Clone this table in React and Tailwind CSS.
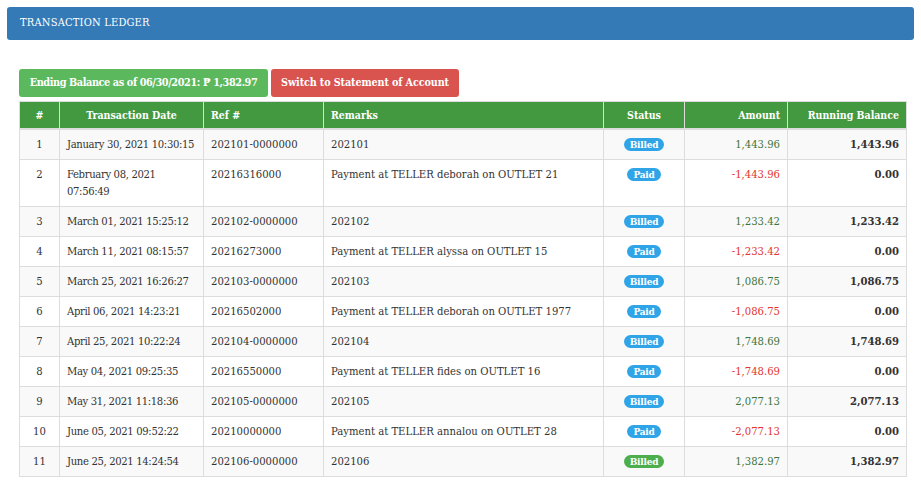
import React from 'react';

const rows = [
  { n: 1, date: 'January 30, 2021 10:30:15', ref: '202101-0000000', remarks: '202101', status: 'Billed', amount: '1,443.96', bal: '1,443.96' },
  { n: 2, date: 'February 08, 2021', time: '07:56:49', ref: '20216316000', remarks: 'Payment at TELLER deborah on OUTLET 21', status: 'Paid', amount: '-1,443.96', bal: '0.00' },
  { n: 3, date: 'March 01, 2021 15:25:12', ref: '202102-0000000', remarks: '202102', status: 'Billed', amount: '1,233.42', bal: '1,233.42' },
  { n: 4, date: 'March 11, 2021 08:15:57', ref: '20216273000', remarks: 'Payment at TELLER alyssa on OUTLET 15', status: 'Paid', amount: '-1,233.42', bal: '0.00' },
  { n: 5, date: 'March 25, 2021 16:26:27', ref: '202103-0000000', remarks: '202103', status: 'Billed', amount: '1,086.75', bal: '1,086.75' },
  { n: 6, date: 'April 06, 2021 14:23:21', ref: '20216502000', remarks: 'Payment at TELLER deborah on OUTLET 1977', status: 'Paid', amount: '-1,086.75', bal: '0.00' },
  { n: 7, date: 'April 25, 2021 10:22:24', ref: '202104-0000000', remarks: '202104', status: 'Billed', amount: '1,748.69', bal: '1,748.69' },
  { n: 8, date: 'May 04, 2021 09:25:35', ref: '20216550000', remarks: 'Payment at TELLER fides on OUTLET 16', status: 'Paid', amount: '-1,748.69', bal: '0.00' },
  { n: 9, date: 'May 31, 2021 11:18:36', ref: '202105-0000000', remarks: '202105', status: 'Billed', amount: '2,077.13', bal: '2,077.13' },
  { n: 10, date: 'June 05, 2021 09:52:22', ref: '20210000000', remarks: 'Payment at TELLER annalou on OUTLET 28', status: 'Paid', amount: '-2,077.13', bal: '0.00' },
  { n: 11, date: 'June 25, 2021 14:24:54', ref: '202106-0000000', remarks: '202106', status: 'Billed', amount: '1,382.97', bal: '1,382.97', last: true },
];

function Badge({ status, last }) {
  const color = last ? 'bg-[#4cae4c]' : 'bg-[#2fa4e7]';
  return (
    <span className={`inline-block ${color} text-white font-bold text-[10px] leading-[13px] px-[6px] rounded-full tracking-[-0.2px]`}>
      {status}
    </span>
  );
}

export default function App() {
  const td = 'border border-[#ddd] px-[7px] py-[6px] align-top';
  const th = 'border border-[#ddd] border-b-[2px] px-[7px] py-0';
  return (
    <div className="bg-white w-[921px] h-[483px] p-[7px] text-[#333] font-['DejaVu_Serif_Condensed','DejaVu_Serif',serif]">
      <div className="bg-[#337ab7] rounded-[3px] h-[33px] flex items-center px-[13px]">
        <span className="text-white text-[11px] tracking-[0.2px]">TRANSACTION LEDGER</span>
      </div>

      <div className="px-[12px] pt-[29px]">
        <div className="flex gap-[3px] mb-[4px]">
          <button className="bg-[#5cb85c] text-white font-bold text-[10.8px] tracking-[-0.4px] whitespace-nowrap h-[28px] w-[249px] rounded-[3px]">
            Ending Balance as of 06/30/2021: ₱ 1,382.97
          </button>
          <button className="bg-[#d9534f] text-white font-bold text-[10.7px] tracking-[-0.1px] whitespace-nowrap h-[28px] w-[188px] rounded-[3px]">
            Switch to Statement of Account
          </button>
        </div>

        <table className="table-fixed border-collapse w-[887px] text-[11.2px] leading-[17px]">
          <colgroup>
            <col className="w-[40px]" />
            <col className="w-[144px]" />
            <col className="w-[120px]" />
            <col className="w-[280px]" />
            <col className="w-[81px]" />
            <col className="w-[103px]" />
            <col className="w-[119px]" />
          </colgroup>
          <thead>
            <tr className="bg-[#43993f] text-white text-[10.5px] leading-[16px] font-bold h-[27px]">
              <th className={`${th} text-center`}>#</th>
              <th className={`${th} text-center`}>Transaction Date</th>
              <th className={`${th} text-left`}>Ref #</th>
              <th className={`${th} text-left`}>Remarks</th>
              <th className={`${th} text-center`}>Status</th>
              <th className={`${th} text-right`}>Amount</th>
              <th className={`${th} text-right`}>Running Balance</th>
            </tr>
          </thead>
          <tbody>
            {rows.map((r, i) => (
              <tr key={r.n} className={i % 2 === 0 ? 'bg-[#f9f9f9]' : 'bg-white'}>
                <td className={`${td} text-center`}>{r.n}</td>
                <td className={`${td} whitespace-nowrap tracking-[-0.35px]`}>
                  {r.date}
                  {r.time && (
                    <>
                      <br />
                      {r.time}
                    </>
                  )}
                </td>
                <td className={td}>{r.ref}</td>
                <td className={td}>{r.remarks}</td>
                <td className={`${td} text-center`}>
                  <Badge status={r.status} last={r.last} />
                </td>
                <td className={`${td} text-right ${r.amount.startsWith('-') ? 'text-[#e3342f]' : 'text-[#3c763d]'}`}>
                  {r.amount}
                </td>
                <td className={`${td} text-right font-bold`}>{r.bal}</td>
              </tr>
            ))}
          </tbody>
        </table>
      </div>
    </div>
  );
}
